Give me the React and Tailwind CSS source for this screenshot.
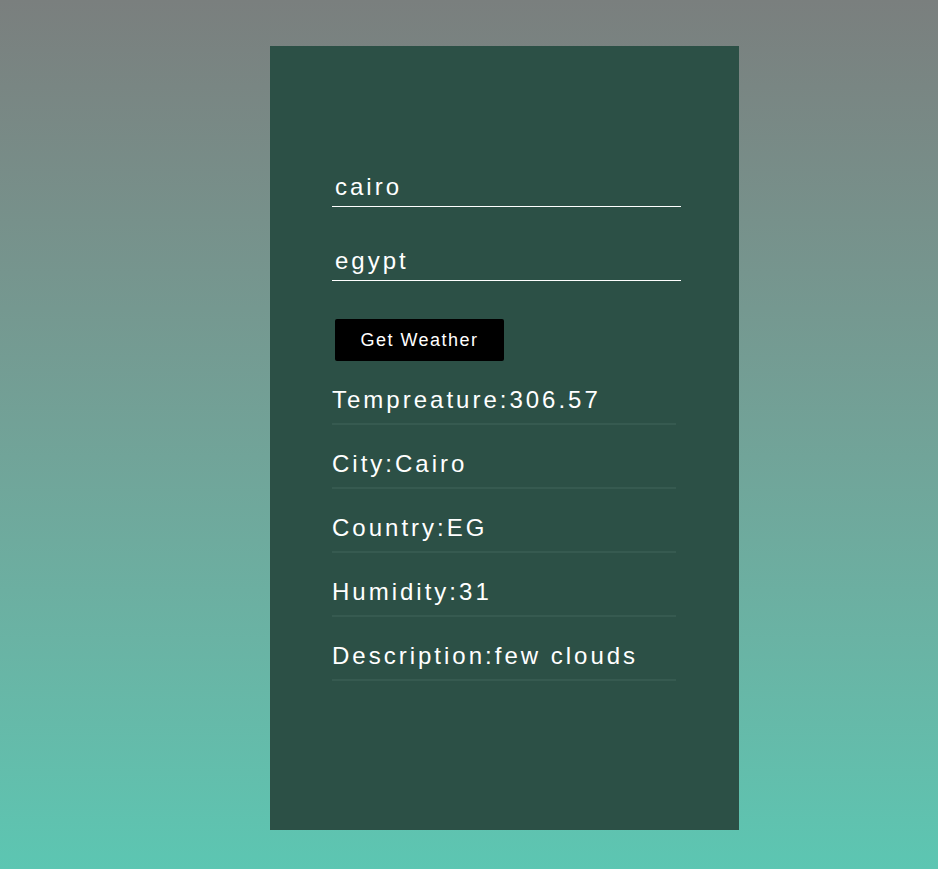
import React from 'react';

const results = [
  {label: 'Tempreature', value: '306.57'},
  {label: 'City', value: 'Cairo'},
  {label: 'Country', value: 'EG'},
  {label: 'Humidity', value: '31'},
  {label: 'Description', value: 'few clouds'},
];

const App = () => {
  return (
    <div
      className="min-h-[869px] w-full flex bg-gradient-to-b from-[#7a7f7e] to-[#5cc6b2] pt-[46px]"
      style={{fontFamily: '"Liberation Sans", Arial, sans-serif'}}
    >
      <div className="ml-[270px] w-[469px] h-[784px] bg-[#2c5046] pl-[62px] pt-[121px]">
        {/* Form */}
        <form className="flex flex-col" onSubmit={(e) => e.preventDefault()}>
          <input
            type="text"
            defaultValue="cairo"
            className="w-[349px] h-[40px] bg-transparent border-b border-white text-white text-[24px] tracking-[3px] pl-[3px] outline-none"
          />
          <input
            type="text"
            defaultValue="egypt"
            className="w-[349px] h-[40px] mt-[34px] bg-transparent border-b border-white text-white text-[24px] tracking-[3px] pl-[3px] outline-none"
          />
          <div>
            <button
              type="submit"
              className="mt-[38px] ml-[3px] w-[169px] h-[42px] bg-black text-white rounded-[2px] text-[18px] tracking-[1.5px]"
            >
              Get Weather
            </button>
          </div>
        </form>

        {/* Weather results */}
        <div className="flex flex-col">
          {results.map((item) => (
            <div
              key={item.label}
              className="w-[344px] pt-[25px] pb-[9px] border-b-2 border-[#365a50]"
            >
              <p className="text-white text-[24px] leading-[28px] tracking-[3px]">
                {item.label}:{item.value}
              </p>
            </div>
          ))}
        </div>
      </div>
    </div>
  );
};

export default App;
